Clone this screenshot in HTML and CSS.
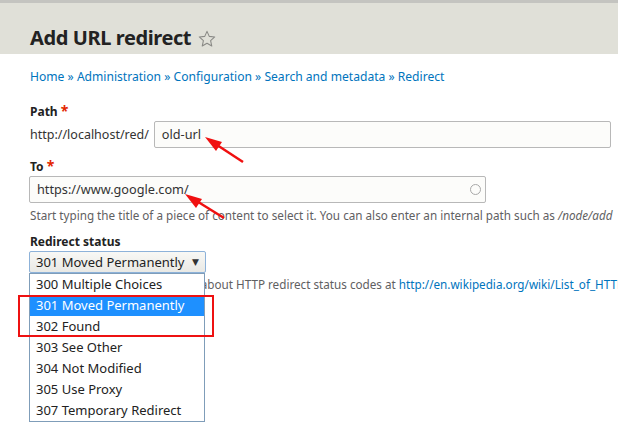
FILE: index.html
```html
<!DOCTYPE html>
<html lang="en">
<head>
    <meta charset="UTF-8">
    <title>Add URL redirect</title>
    <link rel="stylesheet" href="styles.css">
</head>
<body>
    <header class="page-header">
        <h1>Add URL redirect
            <svg class="star" width="18" height="18" viewBox="0 0 20 20"><path d="M10 1.5l2.5 5.6 6.1.6-4.6 4.1 1.3 6-5.3-3.1-5.3 3.1 1.3-6L1.4 7.7l6.1-.6z" fill="none" stroke="#8a8a86" stroke-width="1.2" stroke-linejoin="round"/></svg>
        </h1>
    </header>

    <main class="content">
        <nav class="breadcrumb">
            <a href="#">Home</a> » <a href="#">Administration</a> » <a href="#">Configuration</a> » <a href="#">Search and metadata</a> » <a href="#">Redirect</a>
        </nav>

        <div class="form-item path-item">
            <label class="form-label">Path <span class="req">*</span></label>
            <div class="path-row">
                <span class="prefix">http://localhost/red/</span>
                <div class="text-input path-input">old-url</div>
            </div>
        </div>

        <div class="form-item">
            <label class="form-label">To <span class="req">*</span></label>
            <div class="text-input to-input">https://www.google.com/<span class="throbber"></span></div>
            <div class="description">Start typing the title of a piece of content to select it. You can also enter an internal path such as <em>/node/add</em></div>
        </div>

        <div class="form-item status-item">
            <label class="form-label">Redirect status</label>
            <div class="select">301 Moved Permanently <span class="caret">▼</span></div>
            <div class="description">You can find more information about HTTP redirect status codes at <a href="#">http://en.wikipedia.org/wiki/List_of_HTTP_status_codes</a></div>

            <ul class="options">
                <li>300 Multiple Choices</li>
                <li class="selected">301 Moved Permanently</li>
                <li>302 Found</li>
                <li>303 See Other</li>
                <li>304 Not Modified</li>
                <li>305 Use Proxy</li>
                <li>307 Temporary Redirect</li>
            </ul>
        </div>
    </main>

    <!-- screenshot annotations -->
    <div class="mark-box"></div>
    <svg class="arrows" width="618" height="433">
        <g fill="#f01010" stroke="#f01010">
            <line x1="243" y1="162" x2="214" y2="143" stroke-width="2.5"/>
            <polygon points="205,137 222,142 216,151" stroke="none"/>
            <line x1="224" y1="218" x2="195" y2="200" stroke-width="2.5"/>
            <polygon points="185,194 202,199 196,208" stroke="none"/>
        </g>
    </svg>
</body>
</html>
```

FILE: styles.css
```css
body {
    margin: 0;
    font-family: "Noto Sans", "DejaVu Sans", sans-serif;
    color: #333;
    background: #fff;
    width: 618px;
    height: 433px;
    overflow: hidden;
    position: relative;
}

.page-header {
    background: #e0e0d8;
    border-top: 3px solid #c4c4c0;
    height: 51px;
    padding: 0 30px;
}

h1 {
    margin: 0;
    padding-top: 21px;
    font-size: 20px;
    letter-spacing: -0.4px;
    line-height: 28px;
    font-weight: bold;
    color: #222;
    display: flex;
    align-items: center;
    gap: 7px;
}

.star {
    margin-top: 1px;
}

.content {
    padding: 0 30px;
}

.breadcrumb {
    margin-top: 15px;
    font-size: 12.1px;
    line-height: 16px;
    color: #0074bd;
}

.breadcrumb a,
.description a {
    color: #0074bd;
    text-decoration: none;
}

.form-item {
    margin-top: 10px;
}

.path-item {
    margin-top: 18px;
}

.form-label {
    display: block;
    font-size: 12px;
    font-weight: bold;
    color: #222;
    line-height: 16px;
    margin-bottom: 1px;
}

.req {
    color: #e32700;
    font-size: 14px;
}

.path-row {
    display: flex;
    align-items: center;
    gap: 5px;
}

.prefix {
    font-size: 12.5px;
    color: #333;
    flex-shrink: 0;
}

.text-input {
    box-sizing: border-box;
    height: 27px;
    border: 1px solid #b8b8b8;
    border-radius: 2px;
    background: #fcfcfa;
    font-size: 12.7px;
    line-height: 25px;
    padding: 0 7px;
    color: #333;
    position: relative;
}

.path-input {
    width: 457px;
    flex-shrink: 0;
}

.to-input {
    width: 457px;
    margin-left: -1px;
}

.throbber {
    position: absolute;
    right: 4px;
    top: 7px;
    width: 9px;
    height: 9px;
    border: 1px solid #a8a8a8;
    border-radius: 50%;
}

.description {
    font-size: 11.7px;
    color: #5f6062;
    line-height: 16px;
    margin-top: 4px;
    white-space: nowrap;
}

.status-item {
    margin-top: 11px;
    position: relative;
}

.select {
    box-sizing: border-box;
    width: 177px;
    height: 22px;
    margin-left: -1px;
    border: 1px solid #8db2d9;
    border-radius: 2px;
    background: linear-gradient(#f8f8f5, #e9e9e5);
    font-size: 13px;
    line-height: 20px;
    padding: 0 6px;
    display: flex;
    justify-content: space-between;
    color: #222;
}

.caret {
    font-size: 9px;
    color: #333;
}

.status-item .description {
    margin-top: 3px;
}

.options {
    position: absolute;
    left: -1px;
    top: 39px;
    width: 176px;
    margin: 0;
    padding: 0;
    list-style: none;
    background: #fff;
    border: 1px solid #7f9db9;
    box-sizing: border-box;
}

.options li {
    height: 21px;
    line-height: 21px;
    font-size: 13px;
    padding-left: 6px;
    color: #222;
}

.options li.selected {
    background: #1e90ff;
    color: #fff;
}

.mark-box {
    position: absolute;
    left: 18px;
    top: 295px;
    width: 192px;
    height: 38px;
    border: 2px solid #ee1111;
}

.arrows {
    position: absolute;
    left: 0;
    top: 0;
    pointer-events: none;
}
```
